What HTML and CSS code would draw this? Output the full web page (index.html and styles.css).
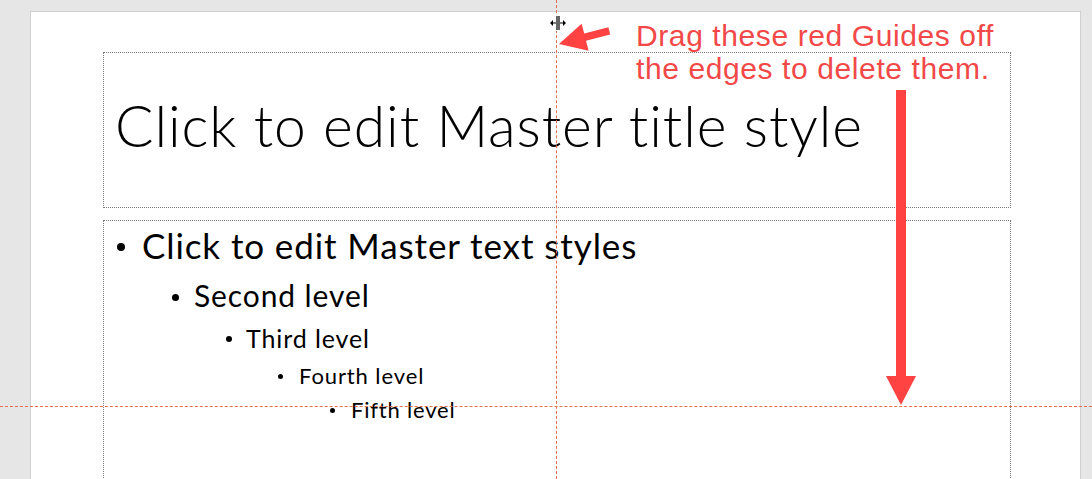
FILE: index.html
```html
<!DOCTYPE html>
<html lang="en">
<head>
    <meta charset="UTF-8">
    <title>Slide Master - Guides</title>
    <link rel="stylesheet" href="styles.css">
</head>
<body>

<div class="workspace">
    <div class="slide">
        <div class="placeholder title-box">
            <div class="title-text">Click to edit Master title style</div>
        </div>
        <div class="placeholder body-box">
            <ul class="levels">
                <li class="lvl1">Click to edit Master text styles</li>
                <li class="lvl2">Second level</li>
                <li class="lvl3">Third level</li>
                <li class="lvl4">Fourth level</li>
                <li class="lvl5">Fifth level</li>
            </ul>
        </div>
    </div>

    <!-- guides -->
    <div class="guide guide-v"></div>
    <div class="guide guide-h"></div>

    <!-- split cursor sitting on the vertical guide -->
    <svg class="cursor" width="20" height="20" viewBox="0 0 20 20">
        <g stroke="#fff" stroke-width="3" fill="none">
            <path d="M9 2v16M11 2v16M2 10h6M12 10h6"/>
        </g>
        <g stroke="#000" stroke-width="1.2" fill="none">
            <path d="M9 3v14M11 3v14M3 10h5M12 10h5"/>
        </g>
        <path d="M2 10l3-3v6z M18 10l-3-3v6z" fill="#000"/>
    </svg>

    <div class="note">Drag these red Guides off<br>the edges to delete them.</div>

    <svg class="arrows" width="1092" height="479" viewBox="0 0 1092 479">
        <polygon fill="#ff4343" points="559,44 581.6,23.7 584.2,33.6 608.4,27.3 610.2,34.5 586,40.8 588.6,50.7"/>
        <rect fill="#ff4343" x="896" y="90" width="10" height="287"/>
        <polygon fill="#ff4343" points="886,376 916,376 901,405"/>
    </svg>
</div>

</body>
</html>
```

FILE: styles.css
```css
body {
    margin: 0;
    background: #e6e6e6;
    font-family: 'Lato', 'Open Sans', sans-serif;
    color: #000;
    overflow: hidden;
}
.workspace {
    position: relative;
    width: 1092px;
    height: 479px;
    overflow: hidden;
}
.slide {
    margin: 11px 0 0 30px;
    width: 1051px;
    height: 500px;
    background: #fff;
    border-left: 1px solid #cfcfcf;
    border-top: 1px solid #cfcfcf;
    border-right: 1px solid #cfcfcf;
    padding: 40px 0 0 72px;
    box-sizing: border-box;
}
.placeholder {
    width: 908px;
    border: 1px dotted #7a7a7a;
    box-sizing: border-box;
}
.title-box {
    height: 156px;
    display: flex;
    align-items: center;
    padding: 0 0 10px 11px;
}
.title-text {
    font-weight: 300;
    font-size: 57px;
    letter-spacing: 0.9px;
}
.body-box {
    margin-top: 12px;
    height: 300px;
    padding: 2px 0 0 10px;
}
.levels {
    list-style: none;
    margin: 0;
    padding: 0;
}
.levels li {
    position: relative;
    white-space: nowrap;
}
.levels li::before {
    content: "";
    position: absolute;
    top: 50%;
    border-radius: 50%;
    background: #000;
}
.lvl1 {
    font-size: 35px;
    letter-spacing: 0.9px;
    line-height: 44px;
    padding-left: 28px;
}
.lvl1::before {
    left: 3px;
    width: 8px;
    height: 8px;
    margin-top: -2px;
}
.lvl2 {
    font-size: 30px;
    letter-spacing: 0.9px;
    line-height: 40px;
    padding-left: 80px;
    margin-top: 8px;
}
.lvl2::before {
    left: 58px;
    width: 7px;
    height: 7px;
    margin-top: -1px;
}
.lvl3 {
    font-size: 25px;
    letter-spacing: 0.9px;
    line-height: 38px;
    padding-left: 132px;
    margin-top: 4px;
}
.lvl3::before {
    left: 112px;
    width: 6px;
    height: 6px;
    margin-top: -2px;
}
.lvl4 {
    font-size: 22px;
    letter-spacing: 0.9px;
    line-height: 38px;
    padding-left: 185px;
}
.lvl4::before {
    left: 164px;
    width: 5px;
    height: 5px;
    margin-top: -2px;
}
.lvl5 {
    font-size: 22px;
    letter-spacing: 0.8px;
    line-height: 30px;
    padding-left: 237px;
}
.lvl5::before {
    left: 216px;
    width: 5px;
    height: 5px;
    margin-top: -2px;
}

.guide {
    position: absolute;
}
.guide-v {
    left: 556px;
    top: 0;
    width: 0;
    height: 479px;
    border-left: 1px dashed #e0704f;
}
.guide-h {
    left: 0;
    top: 406px;
    width: 1092px;
    height: 0;
    border-top: 1px dashed #e0704f;
}
.cursor {
    position: absolute;
    left: 548px;
    top: 13px;
}
.note {
    position: absolute;
    left: 636px;
    top: 19px;
    font-family: 'Liberation Sans', Arial, sans-serif;
    font-size: 30px;
    letter-spacing: 0.6px;
    line-height: 33px;
    color: #f24848;
}
.arrows {
    position: absolute;
    left: 0;
    top: 0;
    pointer-events: none;
}
```
